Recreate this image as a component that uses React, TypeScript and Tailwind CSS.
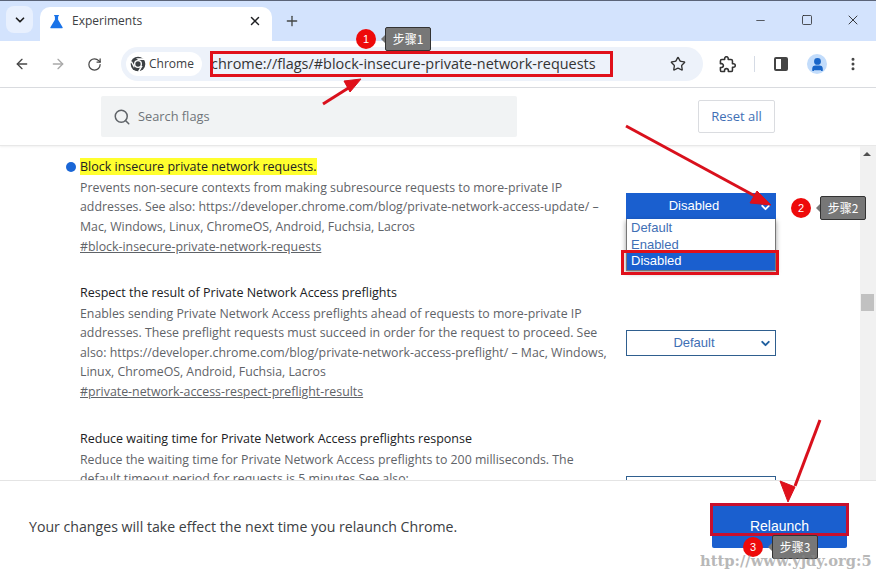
import { ArrowLeft, ArrowRight, ChevronDown, EllipsisVertical, Minus, Plus, RotateCw, Search, Square, Star, User, X } from 'lucide-react'

const FONT = "font-['Open_Sans','Noto_Sans',sans-serif]"

interface FlagRowProps {
  title: string
  lines: string[]
  anchor?: string
  className: string
  marked?: boolean
  children?: React.ReactNode
}

function FlagRow({ title, lines, anchor, className, marked, children }: FlagRowProps) {
  return (
    <div className={`relative flex shrink-0 ${className}`}>
      {marked && <span className="absolute left-[66px] top-[6px] h-[10px] w-[10px] rounded-full bg-[#1a66d6]" />}
      <div className="ml-[80px] w-[546px] shrink-0">
        <h2 className="mt-[1px] h-[20px] text-[12.5px] font-medium leading-[20px] text-[#202124]">
          {marked ? <span className="bg-[#ffff2e]">{title}</span> : title}
        </h2>
        <div className="mt-[1px] text-[12.34px] leading-[19.3px] text-[#5f6368]">
          {lines.map((line) => (
            <p key={line} className="whitespace-nowrap">{line}</p>
          ))}
        </div>
        {anchor && <p className="mt-[2px] text-[12.36px] leading-[18px] text-[#5f6368] underline">{anchor}</p>}
      </div>
      {children}
    </div>
  )
}

function ChromeLogo() {
  return (
    <svg viewBox="0 0 24 24" className="h-[16px] w-[16px]" aria-hidden="true">
      <circle cx="12" cy="12" r="11" fill="#3c4043" />
      <circle cx="12" cy="12" r="6" fill="#fff" />
      <circle cx="12" cy="12" r="4" fill="#3c4043" />
      <path d="M12 6h10l-1.500 -2.500H9z" fill="#fff" />
      <path d="M7 15L2.500 7 1.500 9.500 6 18z" fill="#fff" />
      <path d="M16.500 15l-5 8.500 3-.5 4.500-8z" fill="#fff" />
    </svg>
  )
}

function ExtensionIcon() {
  return (
    <svg viewBox="0 0 24 24" className="ml-[16px] h-[17px] w-[17px]" fill="none" stroke="#333" strokeWidth="2.2" strokeLinejoin="round" aria-hidden="true">
      <path d="M20.500 11H19V7c0-1.100-.9-2-2-2h-4V3.500C13 2.120 11.880 1 10.500 1S8 2.120 8 3.500V5H4c-1.100 0-2 .9-2 2v3.800h1.500c1.490 0 2.700 1.210 2.700 2.700s-1.210 2.700-2.700 2.700H2V20c0 1.100.9 2 2 2h3.800v-1.500c0-1.490 1.210-2.700 2.700-2.700s2.700 1.210 2.700 2.700V22H17c1.100 0 2-.9 2-2v-4h1.500c1.380 0 2.500-1.120 2.500-2.500S21.880 11 20.500 11z" />
    </svg>
  )
}

function Step({ n, label, x, y }: { n: number; label: string; x: number; y: number }) {
  return (
    <div className="absolute flex items-center" style={{ left: x, top: y }}>
      <span className="flex h-[20px] w-[20px] items-center justify-center rounded-full bg-[#ee0a0a] font-['Liberation_Sans',sans-serif] text-[11px] text-white">
        {n}
      </span>
      <span className="relative ml-[9px] flex h-[24px] w-[46px] items-center justify-center rounded-[2px] border border-[#333] bg-[#777] font-['Noto_Sans_CJK_SC',sans-serif] text-[12px] text-white">
        <span className="absolute left-[-5px] top-[7px] h-0 w-0 border-y-[4px] border-r-[4px] border-y-transparent border-r-[#777]" />
        {label}
      </span>
    </div>
  )
}

export default function App() {
  return (
    <div className={`relative flex h-[572px] w-[876px] flex-col overflow-hidden bg-white ${FONT}`}>
      {/* 탭 스트립 */}
      <div className="flex h-[41px] shrink-0 items-end border-t border-[#5b6478] bg-[#d3e3fd]">
        <button className="mb-[8px] ml-[6px] flex h-[27px] w-[27px] items-center justify-center rounded-[8px] bg-[#e8f0fe] text-[#1f1f1f]">
          <ChevronDown size={14} strokeWidth={3} />
        </button>
        <div className="ml-[7px] flex h-[34px] w-[232px] items-center rounded-t-[10px] bg-white pb-[6px] pl-[9px] pr-[10px]">
          <svg viewBox="0 0 16 16" className="h-[15px] w-[15px]" aria-hidden="true">
            <path d="M5.500 1h5v1.500h-.8v3.700L14.500 14c.3.600-.1 1.200-.8 1.200H2.300c-.7 0-1.100-.6-.8-1.200l4.800-7.800V2.500h-.8z" fill="#1a73e8" />
          </svg>
          <span className="ml-[8px] flex-1 text-[12px] text-[#3c4043]">Experiments</span>
          <X size={14} strokeWidth={2.5} className="text-[#202124]" />
        </div>
        <Plus size={16} strokeWidth={2} className="mb-[12px] ml-[12px] text-[#444746]" />
        <div className="ml-auto mb-[13px] flex items-center gap-[33px] pr-[15px] text-[#1f1f1f]">
          <Minus size={13} strokeWidth={1.3} />
          <Square size={12} strokeWidth={1.5} className="translate-x-[1px]" />
          <X size={16} strokeWidth={1.3} />
        </div>
      </div>

      {/* 툴바 */}
      <div className="flex h-[47px] shrink-0 items-center rounded-t-[10px] border-b border-[#dadce0] bg-white pl-[14px]">
        <ArrowLeft size={16} strokeWidth={2} className="text-[#474747]" />
        <ArrowRight size={16} strokeWidth={2} className="ml-[20px] text-[#a9a9a9]" />
        <RotateCw size={15} strokeWidth={2} className="ml-[21px] text-[#474747]" />
        <div className="ml-[19px] flex h-[34px] w-[582px] items-center rounded-full bg-[#edf2fa] pl-[5px]">
          <div className="flex h-[24px] w-[76px] items-center rounded-full bg-white pl-[4px]">
            <ChromeLogo />
            <span className="ml-[3px] text-[12px] text-[#3c4043]">Chrome</span>
          </div>
          <span className="ml-[9px] text-[14.45px] text-[#333]">chrome://flags/#block-insecure-private-network-requests</span>
          <Star size={16} strokeWidth={2} className="ml-auto mr-[17px] text-[#333]" />
        </div>
        <ExtensionIcon />
        <span className="ml-[18px] h-[16px] w-px bg-[#d5dbe5]" />
        <span className="ml-[19px] flex h-[14px] w-[14px] overflow-hidden rounded-[2px] border-2 border-[#444]">
          <span className="w-1/2" />
          <span className="w-1/2 bg-[#444]" />
        </span>
        <span className="ml-[19px] flex h-[20px] w-[20px] items-center justify-center overflow-hidden rounded-full bg-[#c2dcfb]">
          <User size={15} strokeWidth={3} className="fill-[#1a66c8] text-[#1a66c8]" />
        </span>
        <EllipsisVertical size={16} strokeWidth={2.5} className="ml-[18px] text-[#444]" />
      </div>

      {/* 검색 헤더 */}
      <div className="flex h-[58px] shrink-0 border-b border-[#e8e8e8] pl-[101px] shadow-[0_1px_2px_rgba(0,0,0,0.06)]">
        <div className="mt-[8px] flex h-[41px] w-[416px] items-center rounded-[2px] bg-[#f1f3f4] pl-[12px]">
          <Search size={18} strokeWidth={2} className="text-[#5f6368]" />
          <span className="ml-[7px] text-[12.8px] text-[#70757a]">Search flags</span>
        </div>
        <button className="ml-[181px] mt-[12px] h-[33px] w-[77px] rounded-[2px] border border-[#dadce0] bg-white text-[13px] text-[#3f6fb5]">
          Reset all
        </button>
      </div>

      {/* 플래그 목록 */}
      <div className="flex min-h-0 flex-1">
        <div className="flex min-w-0 flex-1 flex-col overflow-hidden pt-[10px]">
          <FlagRow
            marked
            className="h-[126px]"
            title="Block insecure private network requests."
            lines={[
              'Prevents non-secure contexts from making subresource requests to more-private IP',
              'addresses. See also: https://developer.chrome.com/blog/private-network-access-update/ –',
              'Mac, Windows, Linux, ChromeOS, Android, Fuchsia, Lacros',
            ]}
            anchor="#block-insecure-private-network-requests"
          >
            <div className="relative mt-[37px] h-[26px] w-[150px]">
              <div className="relative flex h-[26px] items-center justify-center bg-[#1a5fcf] pr-[14px] font-['Liberation_Sans',sans-serif] text-[13px] text-white">
                Disabled
                <ChevronDown size={13} strokeWidth={3.5} className="absolute right-[4px] top-[8px]" />
              </div>
              <div className="absolute left-0 top-[26px] z-10 w-[150px] border border-t-0 border-[#777] bg-white pt-[1px] font-['Liberation_Sans',sans-serif] text-[13px] leading-[16.6px] text-[#3f6fb5] shadow-[0_2px_5px_rgba(0,0,0,0.4)]">
                <div className="pl-[4px]">Default</div>
                <div className="pl-[4px]">Enabled</div>
                <div className="bg-[#1a5fcf] pl-[4px] text-white">Disabled</div>
              </div>
            </div>
          </FlagRow>
          <FlagRow
            className="h-[146px]"
            title="Respect the result of Private Network Access preflights"
            lines={[
              'Enables sending Private Network Access preflights ahead of requests to more-private IP',
              'addresses. These preflight requests must succeed in order for the request to proceed. See',
              'also: https://developer.chrome.com/blog/private-network-access-preflight/ – Mac, Windows,',
              'Linux, ChromeOS, Android, Fuchsia, Lacros',
            ]}
            anchor="#private-network-access-respect-preflight-results"
          >
            <div className="relative mt-[48px] flex h-[26px] w-[150px] items-center justify-center border border-[#2f5f8f] pr-[14px] font-['Liberation_Sans',sans-serif] text-[13px] text-[#3f6fb5]">
              Default
              <ChevronDown size={13} strokeWidth={3.5} className="absolute right-[3px] top-[6px] text-[#1f5f9f]" />
            </div>
          </FlagRow>
          <FlagRow
            className="h-[80px]"
            title="Reduce waiting time for Private Network Access preflights response"
            lines={[
              'Reduce the waiting time for Private Network Access preflights to 200 milliseconds. The',
              'default timeout period for requests is 5 minutes See also:',
            ]}
          >
            <div className="mt-[48px] h-[26px] w-[150px] border border-[#2f5f8f]" />
          </FlagRow>
        </div>
        <div className="relative w-[16px] shrink-0 bg-[#f1f1f1]">
          <span className="absolute left-[3px] top-[6px] h-0 w-0 border-x-[4px] border-b-[4px] border-x-transparent border-b-[#505050]" />
          <span className="absolute left-[1px] top-[148px] h-[17px] w-[13px] bg-[#c1c1c1]" />
        </div>
      </div>

      {/* 재시작 바 */}
      <div className="z-10 flex h-[92px] shrink-0 items-start border-t border-[#e4e4e4] bg-white pl-[29px]">
        <p className="mt-[35px] text-[14.15px] text-[#3c4043]">Your changes will take effect the next time you relaunch Chrome.</p>
        <button className="absolute left-[712px] top-[505px] h-[43px] w-[135px] rounded-[2px] bg-[#1a5fcf] font-['Liberation_Sans',sans-serif] text-[14px] text-white">
          Relaunch
        </button>
      </div>

      {/* 주석 오버레이 */}
      <div className="z-30">
        <Step n={1} label="步骤1" x={356} y={27} />
        <Step n={2} label="步骤2" x={791} y={196} />
        <Step n={3} label="步骤3" x={743} y={535} />
      </div>
      <div className="absolute left-[210px] top-[51px] z-30 h-[26px] w-[403px] border-[3px] border-[#e0101a]" />
      <div className="absolute left-[621px] top-[250px] z-20 h-[25px] w-[158px] border-[3px] border-[#e0101a]" />
      <div className="absolute left-[710px] top-[503px] z-20 h-[33px] w-[139px] border-[3px] border-[#c8102e]" />
      <svg className="absolute left-0 top-0 z-20" width="876" height="572" aria-hidden="true">
        <g stroke="#d9101c" strokeWidth="3" fill="#e0101a">
          <line x1="323" y1="104" x2="350" y2="87" />
          <path d="M361 79l-17 2 6 11z" strokeWidth="1" />
          <line x1="626" y1="126" x2="755" y2="196" />
          <path d="M771 205l-21-2 7-12z" strokeWidth="1" />
          <line x1="820" y1="420" x2="795" y2="486" />
          <path d="M788 502l-8-21 15 6z" strokeWidth="1" />
        </g>
      </svg>
      <span className="absolute left-[700px] top-[550px] z-30 font-['DejaVu_Serif',serif] text-[14.7px] font-bold text-[#8a8a8a] opacity-60">
        http://www.yjdy.org:5
      </span>
    </div>
  )
}
